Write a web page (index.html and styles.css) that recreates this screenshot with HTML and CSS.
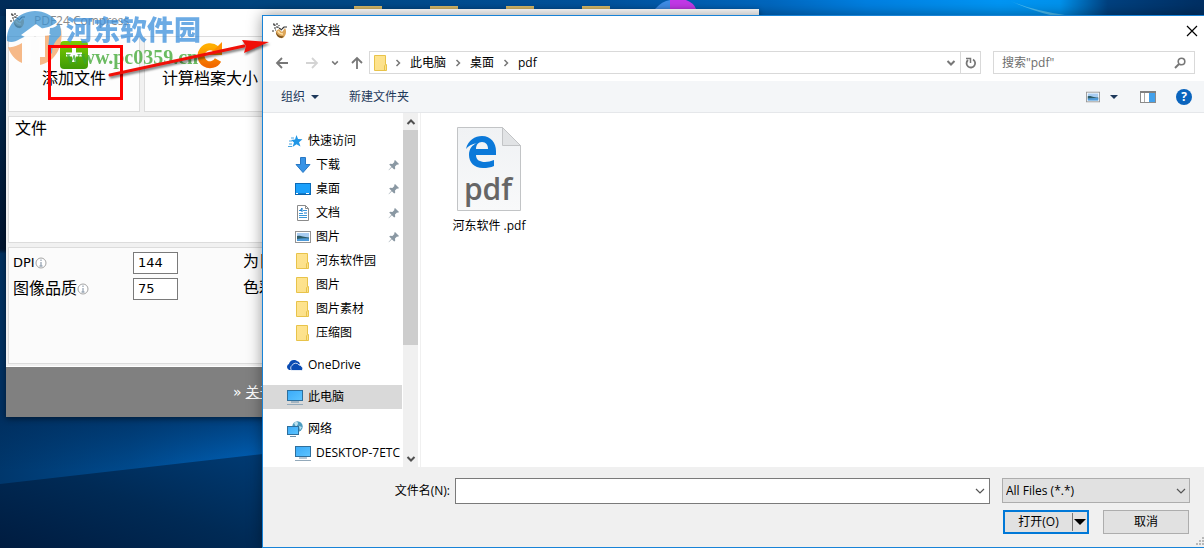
FILE: index.html
```html
<!DOCTYPE html>
<html lang="zh-CN">
<head>
<meta charset="utf-8">
<title>选择文档</title>
<link rel="stylesheet" href="styles.css">
</head>
<body>
<svg class="defs" width="0" height="0" aria-hidden="true">
  <defs>
    <linearGradient id="gFolder" x1="0" y1="0" x2="1" y2="1"><stop offset="0" stop-color="#ffe48f"/><stop offset="1" stop-color="#fbe08a"/></linearGradient>
    <linearGradient id="gScreen" x1="0" y1="0" x2="1" y2="1"><stop offset="0" stop-color="#3aaaf8"/><stop offset="1" stop-color="#5cc4ff"/></linearGradient>
    <linearGradient id="gPage" x1="0" y1="0" x2="0" y2="1"><stop offset="0" stop-color="#f0f2f4"/><stop offset="1" stop-color="#f8f9fa"/></linearGradient>
    <linearGradient id="gPlus" x1="0" y1="0" x2="0" y2="1"><stop offset="0" stop-color="#7ccb00"/><stop offset="1" stop-color="#3f9a08"/></linearGradient>
    <linearGradient id="gSpin" x1="0" y1="0" x2="0" y2="1"><stop offset="0" stop-color="#ffae00"/><stop offset="1" stop-color="#f26a00"/></linearGradient>
    <symbol id="folder" viewBox="0 0 16 16"><path d="M1.500.5h11v9h1v6h-12z" fill="url(#gFolder)" stroke="#e8c34a"/><path d="M11.500 15.500v-4.500l1-1.500" fill="none" stroke="#e8c34a"/></symbol>
    <symbol id="pc" viewBox="0 0 16 16"><rect x=".5" y="1.500" width="15" height="10" fill="url(#gScreen)" stroke="#2f6f9c"/><path d="M4 13h8" stroke="#6c8ea8"/><path d="M0 15.500h16" stroke="#93a9ba"/></symbol>
    <symbol id="picture" viewBox="0 0 16 16"><rect x=".5" y="2.500" width="15" height="11" fill="#fff" stroke="#949494"/><rect x="2" y="4" width="12" height="8" fill="#a9cdf2"/><path d="M2 7c4-1 5 1 12 1.500V10H2z" fill="#2d5c68"/><path d="M2 10c4-1 8-1 12-.5V12H2z" fill="#4f9bd9"/></symbol>
    <symbol id="pin" viewBox="0 0 12 12"><path d="M7 1l4 4-1 .8-1-.2-2 2 .2 2.200-1 .8-2.400-2.400L.8 11.200.6 11l2.800-3.200L1.200 5.600l1-.8 2.200.2 2-2L6.200 2z" fill="#8a98a3"/></symbol>
    <symbol id="crumb" viewBox="0 0 8 8"><path d="M2.500 1l3 3-3 3" fill="none" stroke="#777" stroke-width="1.500"/></symbol>
    <symbol id="chevron" viewBox="0 0 10 8"><path d="M1 2l4 4 4-4" fill="none" stroke="currentColor" stroke-width="1.200"/></symbol>
    <symbol id="bold-chevron" viewBox="0 0 10 8"><path d="M1.500 2L5 5.500 8.500 2" fill="none" stroke="currentColor" stroke-width="2"/></symbol>
    <symbol id="caret" viewBox="0 0 8 4"><path d="M0 0h8L4 4z" fill="currentColor"/></symbol>
    <symbol id="logo" viewBox="0 0 16 16"><path d="M4 8l3-2 3 3 3-4c2 3 1 8-2 10-4 1-8-3-7-7z" fill="#dda65a"/><path d="M4 9c2 4 5 5 8 4l-2 2c-4 0-6-3-6-6z" fill="#7a521e"/><path d="M6 8c1 2 3 3 5 3" stroke="#ffe1a2" stroke-width="1.500" fill="none"/><path d="M1 1h1v1h1v1M5 0v2M7 2v1M2 5h2M0 8h2M4 4h2v1M3 7h1M7 5l3 2M10 6l2-2h3" fill="none" stroke="#343434" stroke-width="1.100"/></symbol>
    <symbol id="info" viewBox="0 0 12 12"><circle cx="6" cy="6" r="5" fill="#fff" stroke="#a4a4a4"/><path d="M6 5v4M6 2.500v1.500M4.500 9h3" stroke="#9aa7b5" stroke-width="1.300"/></symbol>
  </defs>
</svg>

<svg class="wallpaper" viewBox="0 0 1204 548" preserveAspectRatio="none" aria-hidden="true">
  <defs>
    <linearGradient id="sky"><stop offset="0" stop-color="#002c59"/><stop offset=".22" stop-color="#00457f"/><stop offset=".5" stop-color="#00529d"/><stop offset=".64" stop-color="#0067bf"/><stop offset=".72" stop-color="#0080e2"/><stop offset=".83" stop-color="#0096f5"/><stop offset=".88" stop-color="#0093ee"/><stop offset=".92" stop-color="#004180"/><stop offset="1" stop-color="#002f63"/></linearGradient>
    <linearGradient id="edge" x1="0" y1="0" x2="0" y2="1"><stop offset="0" stop-color="#003260"/><stop offset=".35" stop-color="#001c3c"/><stop offset=".53" stop-color="#00142e"/><stop offset=".54" stop-color="#00305f"/><stop offset="1" stop-color="#003062"/></linearGradient>
    <linearGradient id="beam" x1="0" y1="0" x2="1" y2="0"><stop offset="0" stop-color="#00376c"/><stop offset=".5" stop-color="#004a8d"/><stop offset="1" stop-color="#0066c0"/></linearGradient>
    <linearGradient id="beamfade" x1="0" y1="0" x2="0" y2="1"><stop offset="0" stop-color="#002a58" stop-opacity=".7"/><stop offset="1" stop-color="#002a58" stop-opacity="0"/></linearGradient>
    <linearGradient id="ground" x1="0" y1="1" x2="1" y2="0"><stop offset="0" stop-color="#001c40"/><stop offset=".5" stop-color="#002a55"/><stop offset="1" stop-color="#003b74"/></linearGradient>
  </defs>
  <rect width="1204" height="548" fill="url(#sky)"/>
  <rect y="16" width="6" height="440" fill="url(#edge)"/>
  <rect y="410" width="263" height="138" fill="url(#beam)"/>
  <rect y="410" width="263" height="60" fill="url(#beamfade)"/>
  <path d="M0 484l263-30v94H0z" fill="url(#ground)"/>
  <path d="M1008 0Q1030 10 1065 15h-15Q1030 10 1008 0z" fill="#5fc8f4" opacity=".8"/>
  <g fill="#d9bb69"><path d="M354 6h28v9h-28zM430 6h28v9h-28zM506 6h28v9h-28zM582 6h28v9h-28z"/></g>
  <path d="M655 9q7-8 15-9v9z" fill="#3f8de6"/><path d="M670 0h16q8 3 10 9h-26z" fill="#c339e8"/>
</svg>

<main class="desktop">
  <section class="app" aria-label="PDF24 Compress">
    <header class="app-title"><svg width="16" height="16"><use href="#logo"/></svg><span>PDF24 Compress</span></header>
    <div class="tiles">
      <button class="tile" type="button">
        <svg width="28" height="28" viewBox="0 0 28 28"><rect width="28" height="28" rx="4" fill="url(#gPlus)"/><path d="M14 6v15M6 13.500h16" stroke="#fff" stroke-width="4"/></svg>
        <span>添加文件</span>
      </button>
      <button class="tile" type="button">
        <svg width="28" height="28" viewBox="0 0 28 28"><path d="M22 19a9 9 0 1 1-2-11" fill="none" stroke="url(#gSpin)" stroke-width="7"/><path d="M26 1v13H13z" fill="#ff9000"/></svg>
        <span>计算档案大小</span>
      </button>
    </div>
    <div class="files">文件</div>
    <form class="settings">
      <label for="dpi">DPI<svg width="12" height="12"><use href="#info"/></svg></label>
      <input id="dpi" value="144"><span>为目标</span>
      <label for="quality">图像品质<svg width="12" height="12"><use href="#info"/></svg></label>
      <input id="quality" value="75"><span>色彩</span>
    </form>
    <footer class="app-foot"><span>»</span><a href="#about">关于</a></footer>
  </section>

  <section class="dialog" role="dialog" aria-label="选择文档">
    <header class="dlg-title">
      <svg width="16" height="16"><use href="#logo"/></svg><span>选择文档</span>
      <button class="close" type="button" aria-label="关闭"><svg width="12" height="12" viewBox="0 0 12 12"><path d="M1 1l10 10M11 1L1 11" stroke="#000" stroke-width="1.200"/></svg></button>
    </header>
    <nav class="navbar">
      <div class="arrows">
        <button type="button" aria-label="后退"><svg width="14" height="12" viewBox="0 0 14 12"><path d="M13 6H2M7 1L2 6l5 5" fill="none" stroke="#777" stroke-width="1.800"/></svg></button>
        <button type="button" aria-label="前进"><svg width="14" height="12" viewBox="0 0 14 12"><path d="M1 6h11M7 1l5 5-5 5" fill="none" stroke="#d4d4d4" stroke-width="1.800"/></svg></button>
        <button class="recent" type="button" aria-label="最近"><svg width="8" height="8" viewBox="0 0 10 8"><use href="#bold-chevron"/></svg></button>
        <button type="button" aria-label="上移"><svg width="12" height="14" viewBox="0 0 12 14"><path d="M6 13V2M1 7l5-5 5 5" fill="none" stroke="#777" stroke-width="1.800"/></svg></button>
      </div>
      <div class="address">
        <svg width="16" height="16"><use href="#folder"/></svg>
        <svg width="8" height="8"><use href="#crumb"/></svg><a href="#pc">此电脑</a>
        <svg width="8" height="8"><use href="#crumb"/></svg><a href="#desk">桌面</a>
        <svg width="8" height="8"><use href="#crumb"/></svg><a href="#pdf">pdf</a>
        <button class="drop" type="button" aria-label="历史"><svg width="10" height="8"><use href="#bold-chevron"/></svg></button>
        <button class="reload" type="button" aria-label="刷新"><svg width="12" height="12" viewBox="0 0 12 12"><path d="M8 2.500a4.300 4.300 0 1 1-5 .5" fill="none" stroke="#777" stroke-width="1.800"/><path d="M1 1.500h4.500V6" fill="none" stroke="#777" stroke-width="1.500"/></svg></button>
      </div>
      <div class="search">
        <input type="text" aria-label="搜索" placeholder='搜索"pdf"'>
        <svg width="12" height="12" viewBox="0 0 12 12"><circle cx="7.500" cy="4.500" r="3.300" fill="none" stroke="#777" stroke-width="1.600"/><path d="M5 7L1 11" stroke="#777" stroke-width="2"/></svg>
      </div>
    </nav>
    <div class="toolbar">
      <button type="button">组织<svg width="8" height="4"><use href="#caret"/></svg></button>
      <button type="button">新建文件夹</button>
      <span class="grow"></span>
      <button class="view" type="button" aria-label="视图"><svg width="14" height="14" viewBox="0 0 16 16"><use href="#picture"/></svg><svg width="8" height="4"><use href="#caret"/></svg></button>
      <button type="button" aria-label="预览窗格"><svg width="16" height="12" viewBox="0 0 16 12"><rect x=".5" y=".5" width="15" height="11" fill="#fff" stroke="#8b8b8b"/><path d="M0 1h16" stroke="#808080" stroke-width="2"/><path d="M4.500 2v9" stroke="#aaa"/><rect x="9" y="2" width="6" height="9" fill="#42a1ec"/></svg></button>
      <button class="help" type="button" aria-label="帮助">?</button>
    </div>
    <div class="content">
      <aside class="side">
        <ul class="tree">
          <li><svg width="16" height="16" viewBox="0 0 16 16"><path d="M9.500 2l1.500 4 4.500.2-3.500 3 1.500 4.300-4-2.300-4 2.800L7 9.500 4 7l4-.5z" fill="#2096e6"/><path d="M4 5h3M2 8h3M2 11h3M1 13.500h4" stroke="#4aa5e0"/></svg><span>快速访问</span></li>
          <li class="sub"><svg width="16" height="16" viewBox="0 0 16 16"><path d="M5.500.5h5v7h4.500L8 15.500 1 7.500h4.500z" fill="#3793e6" stroke="#2878c4"/></svg><span>下载</span><svg class="pin" width="12" height="12"><use href="#pin"/></svg></li>
          <li class="sub"><svg width="16" height="16" viewBox="0 0 16 16"><rect x=".5" y="2.500" width="15" height="11" fill="#1ba0fb" stroke="#0b6bb8"/><path d="M1 13h14" stroke="#0b5a9c"/><path d="M1 12.500h2M11 12.500h3" stroke="#fff"/></svg><span>桌面</span><svg class="pin" width="12" height="12"><use href="#pin"/></svg></li>
          <li class="sub"><svg width="16" height="16" viewBox="0 0 16 16"><path d="M2.500.5h8l3 3v12h-11z" fill="#fff" stroke="#8b8b8b"/><path d="M10.500.5v3h3" fill="none" stroke="#8b8b8b"/><path d="M4 5.500h3M8 5.500h4M4 8.500h4M4 10.500h8M4 12.500h8" stroke="#3a97d8"/><path d="M5 6l2-3v4M9 8h3" stroke="#1979ca" fill="none"/></svg><span>文档</span><svg class="pin" width="12" height="12"><use href="#pin"/></svg></li>
          <li class="sub"><svg width="16" height="16"><use href="#picture"/></svg><span>图片</span><svg class="pin" width="12" height="12"><use href="#pin"/></svg></li>
          <li class="sub"><svg width="16" height="16"><use href="#folder"/></svg><span>河东软件园</span></li>
          <li class="sub"><svg width="16" height="16"><use href="#folder"/></svg><span>图片</span></li>
          <li class="sub"><svg width="16" height="16"><use href="#folder"/></svg><span>图片素材</span></li>
          <li class="sub"><svg width="16" height="16"><use href="#folder"/></svg><span>压缩图</span></li>
        </ul>
        <ul class="tree"><li><svg width="16" height="16" viewBox="0 0 16 16"><path d="M1 12a3 3 0 0 1 1-5 5 5 0 0 1 8-3 4 4 0 0 1 3 3l-1 1-7 5H2z" fill="#0a4cb3"/><path d="M5 13.500a3 3 0 0 1 0-5 4 4 0 0 1 7-.5 3 3 0 0 1 3 2 2 2 0 0 1-.5 3.500z" fill="#0a4cb3" stroke="#fff" stroke-width=".8"/></svg><span>OneDrive</span></li></ul>
        <ul class="tree"><li class="selected"><svg width="16" height="16"><use href="#pc"/></svg><span>此电脑</span></li></ul>
        <ul class="tree">
          <li><svg width="16" height="16" viewBox="0 0 16 16"><circle cx="10.500" cy="5.500" r="5.200" fill="#4d9cc0"/><path d="M7 2q4-3 4 1L9 6zM12 5l3 1-2 3z" fill="#bfe2ee"/><rect x=".5" y="5.500" width="11" height="8" fill="url(#gScreen)" stroke="#2f6f9c"/><path d="M3 15.500h6" stroke="#6c8ea8"/></svg><span>网络</span></li>
          <li class="sub"><svg width="16" height="16"><use href="#pc"/></svg><span>DESKTOP-7ETC</span></li>
        </ul>
      </aside>
      <div class="scroll"><svg width="10" height="8" viewBox="0 0 10 8"><path d="M1.500 6L5 2.500 8.500 6" fill="none" stroke="#505050" stroke-width="2"/></svg><span class="thumb"></span><svg width="10" height="8"><use href="#bold-chevron"/></svg></div>
      <div class="listing">
        <figure class="file">
          <svg width="64" height="84" viewBox="0 0 64 84"><path d="M.5.500h45L63.500 18.500v65H.5z" fill="url(#gPage)" stroke="#c2c4c6"/><path d="M45.500.500v18h18z" fill="#e1e3e5" stroke="#c2c4c6"/><path d="M9 22C11 13 18 9 25 9c9 0 14 7 14 15v4H19c0 5 4 7 9 7 3 0 6-1 9-2v6c-3 1.500-7 2-11 2-9 0-14-6-14-13 0-6 3-10 8-12-5 1-9 3-11 6zm10 0h12c0-4-2-7-6-7s-6 3-6 7z" fill="#0b79d9"/><text x="31" y="73" text-anchor="middle" class="filetype">pdf</text></svg>
          <figcaption>河东软件 .pdf</figcaption>
        </figure>
      </div>
    </div>
    <form class="bottom">
      <label for="fname">文件名(N):</label>
      <div class="combo"><input id="fname" type="text"><button type="button" aria-label="展开"><svg width="10" height="8"><use href="#chevron"/></svg></button></div>
      <div class="picker"><select aria-label="文件类型"><option>All Files (*.*)</option></select><svg width="10" height="8"><use href="#chevron"/></svg></div>
      <div class="actions">
        <div class="open"><button type="button">打开(O)</button><button class="split" type="button" aria-label="打开选项"><svg width="12" height="6" viewBox="0 0 8 4"><use href="#caret"/></svg></button></div>
        <button class="cancel" type="button">取消</button>
      </div>
      <svg class="grip" width="8" height="8" viewBox="0 0 8 8"><path d="M6 0h2v2H6zM3 3h2v2H3zM6 3h2v2H6zM0 6h2v2H0zM3 6h2v2H3zM6 6h2v2H6z" fill="#b8b8b8"/></svg>
    </form>
  </section>

  <div class="watermark">
    <svg width="60" height="56" viewBox="0 0 60 56"><path d="M1 30C0 14 13 0 29 0c9 0 17 4 22 11-7 6-12 5-19 8L14 28C9 31 5 32 1 30z" fill="#3d93d2"/><path d="M2 36c5 1 10-2 14-4v20C9 49 4 43 2 36zM34 54V24c8 2 16 0 21-7 3 19-6 34-21 37z" fill="#f4a361"/><path d="M44 17c4 0 7-2 9-5 2 4 2 8 2 12-5 6-9 9-9 19l-4-4z" fill="#3d93d2"/><path d="M15 24l15-11 15 11h-6v22h-6V28l-4-3-4 3v25h-6V26z" fill="#fff"/></svg>
    <div><strong>河东软件园</strong><em>www.pc0359.cn</em></div>
  </div>
  <div class="mark"></div>
  <svg class="arrow" width="164" height="44" viewBox="0 0 164 44"><g class="shade"><path d="M2 37L136 8" stroke="#f01008" stroke-width="3" stroke-linecap="round"/><path d="M161 4L134 2l4 6-2 7z" fill="#f01008"/></g></svg>
</main>
</body>
</html>
```
FILE: styles.css
```css
* { box-sizing: border-box; }
body {
  margin: 0;
  height: 100vh;
  overflow: hidden;
  font: 12px/16px "Open Sans", "Noto Sans CJK SC", sans-serif;
  color: #000;
}
button, input, select { font: inherit; color: inherit; margin: 0; }
button { padding: 0; border: 0; background: none; display: flex; align-items: center; justify-content: center; }
input { min-width: 0; outline: 0; }
a { color: inherit; text-decoration: none; }
svg { display: block; flex: none; }
ul { list-style: none; margin: 0; padding: 0; }
.defs { position: absolute; }
.wallpaper { position: absolute; inset: 0; width: 100%; height: 100%; }
.desktop { position: relative; height: 100%; overflow: hidden; }

/* Compress window */
.app {
  position: absolute;
  left: 6px;
  top: 9px;
  width: 62.5%;
  border-top: 1px solid #fff;
  background: #f1f1f1;
  box-shadow: 0 2px 6px rgba(0, 0, 0, .45);
  font: 16px/20px "DejaVu Sans", "Noto Sans CJK SC", sans-serif;
}
.app-title {
  display: flex;
  align-items: center;
  gap: 8px;
  height: 26px;
  padding: 0 0 4px 4px;
  background: #fff;
  color: #8a8a8a;
  font: 12px/16px "Open Sans", sans-serif;
}
.tiles { display: flex; gap: 4px; padding: 0 2px; }
.tile {
  flex-direction: column;
  justify-content: flex-start;
  width: 132px;
  height: 76px;
  padding-top: 4px;
  border: 1px solid #dcdcdc;
  background: #fdfdfd;
}
.files { min-height: 127px; margin: 4px 2px; padding: 2px 6px; border: 1px solid #dcdcdc; background: #fff; }
.settings {
  display: grid;
  grid-template-columns: 120px 45px 1fr;
  grid-auto-rows: 22px;
  row-gap: 4px;
  min-height: 117px;
  margin: 0 2px;
  padding: 4px;
  border: 1px solid #dcdcdc;
  background: #fbfbfb;
}
.settings label { display: flex; align-items: center; }
.settings label, .settings input { font-size: 13px; }
.settings label[for="quality"] { font-size: 16px; }
.settings input { padding: 0 4px; border: 1px solid #7a7a7a; background: #fff; }
.settings span { padding-left: 65px; }
.app-foot {
  display: flex;
  align-items: center;
  gap: 4px;
  height: 51px;
  margin-top: 2px;
  padding-left: 227px;
  border-top: 1px solid #fff;
  background: #808080;
  color: #fff;
  font-size: 14px;
}
.app-foot a { text-decoration: underline; }

/* File dialog */
.dialog {
  position: absolute;
  inset: 15px 0 0 262px;
  display: flex;
  flex-direction: column;
  border: solid #1883d7;
  border-width: 1px 0 1px 1px;
  background: #fff;
  box-shadow: 0 0 14px rgba(0, 0, 0, .4);
}
.dlg-title { display: flex; align-items: center; gap: 4px; height: 30px; padding: 0 6px 0 9px; }
.close { margin-left: auto; }
.navbar { display: flex; align-items: center; height: 35px; padding: 0 9px 2px 12px; color: #777; }
.arrows { display: flex; align-items: center; gap: 16px; width: 94px; }
.arrows .recent { margin: 0 -4px; }
.address {
  flex: 1;
  display: flex;
  align-items: center;
  gap: 8px;
  height: 23px;
  padding-left: 3px;
  border: 1px solid #d9d9d9;
  color: #000;
}
.address > svg:first-child { margin-right: -3px; }
.drop { margin-left: auto; color: #777; }
.reload { width: 20px; height: 21px; border-left: 1px solid #d9d9d9; margin-left: -4px; }
.search { display: flex; align-items: center; width: 202px; height: 23px; margin-left: 12px; padding: 0 8px; border: 1px solid #d9d9d9; }
.search input { flex: 1; padding: 0; border: 0; background: none; }
.search input::placeholder { color: #6d6d6d; }
.toolbar {
  display: flex;
  align-items: center;
  gap: 20px;
  height: 32px;
  padding: 0 12px 0 18px;
  border-bottom: 1px solid #e5e7ea;
  background: #f4f6f8;
  color: #1e395b;
}
.toolbar button { gap: 6px; }
.toolbar button:nth-child(2) { margin-left: 10px; }
.toolbar .view { gap: 10px; margin-right: 2px; }
.grow { flex: 1; }
.toolbar .help { width: 16px; height: 16px; border-radius: 50%; background: #0a64bd; color: #fff; font-weight: bold; }
.content { flex: 1; display: flex; min-height: 0; }
.side { width: 139px; padding-top: 16px; overflow: hidden; }
.tree { margin-bottom: 8px; }
.tree li { display: flex; align-items: center; gap: 5px; height: 24px; padding-left: 24px; white-space: nowrap; }
.tree .sub { padding-left: 32px; }
.tree .selected { background: #d9d9d9; }
.tree .pin { margin: 0 2px 0 auto; }
.scroll { display: flex; flex-direction: column; align-items: center; justify-content: space-between; width: 15px; margin-left: 1px; padding: 5px 0 4px; background: #f0f0f0; color: #505050; }
.thumb { align-self: stretch; height: 215px; margin: 4px 0 auto; background: #cdcdcd; }
.listing { flex: 1; margin-left: 2px; padding: 14px 24px; border-left: 1px solid #f0f0f0; }
.file { display: flex; flex-direction: column; align-items: center; gap: 7px; width: 88px; margin: 0; white-space: nowrap; }
.filetype { font: 600 30px "Open Sans", sans-serif; fill: #666; }
.bottom {
  position: relative;
  display: grid;
  grid-template-columns: 187px 1fr 188px;
  grid-template-rows: 26px 24px;
  gap: 6px 5px;
  height: 80px;
  padding: 11px 14px 0 0;
  background: #f0f0f0;
}
.bottom label { align-self: center; justify-self: end; }
.combo { display: flex; margin-right: 7px; border: 1px solid #7a7a7a; background: #fff; color: #555; }
.combo input { flex: 1; border: 0; background: none; }
.combo button { width: 18px; }
.picker { display: grid; align-items: center; height: 25px; color: #555; }
.picker > * { grid-area: 1 / 1; }
.picker select { appearance: none; height: 100%; padding: 0 3px; border: 1px solid #adadad; border-radius: 0; background: #e1e1e1; color: #000; }
.picker svg { justify-self: end; margin-right: 4px; pointer-events: none; }
.actions { grid-column: 3; display: grid; grid-template-columns: 1fr 1fr; gap: 14px; padding: 0 1px; }
.open { display: flex; border: 2px solid #0078d7; background: #e1e1e1; }
.open button { flex: 1; }
.open .split { flex: none; width: 15px; margin: 1px 0; border-left: 1px solid #777; }
.cancel { border: 1px solid #adadad; background: #e1e1e1; }
.grip { position: absolute; right: 0; bottom: 2px; }

/* Overlays */
.watermark { position: absolute; left: 6px; top: 11px; display: flex; opacity: .75; pointer-events: none; }
.watermark strong { display: block; color: #3b8fdc; font: 900 27px/36px "Noto Sans CJK SC", sans-serif; }
.watermark em { display: block; color: #3ba52e; font: bold 20px/20px "Liberation Serif", serif; }
.mark { position: absolute; left: 48px; top: 45px; width: 75px; height: 55px; border: 3px solid #f00; }
.arrow { position: absolute; left: 108px; top: 38px; }
.shade { filter: drop-shadow(1px 2px 1px rgba(0, 0, 0, .5)); }
```
